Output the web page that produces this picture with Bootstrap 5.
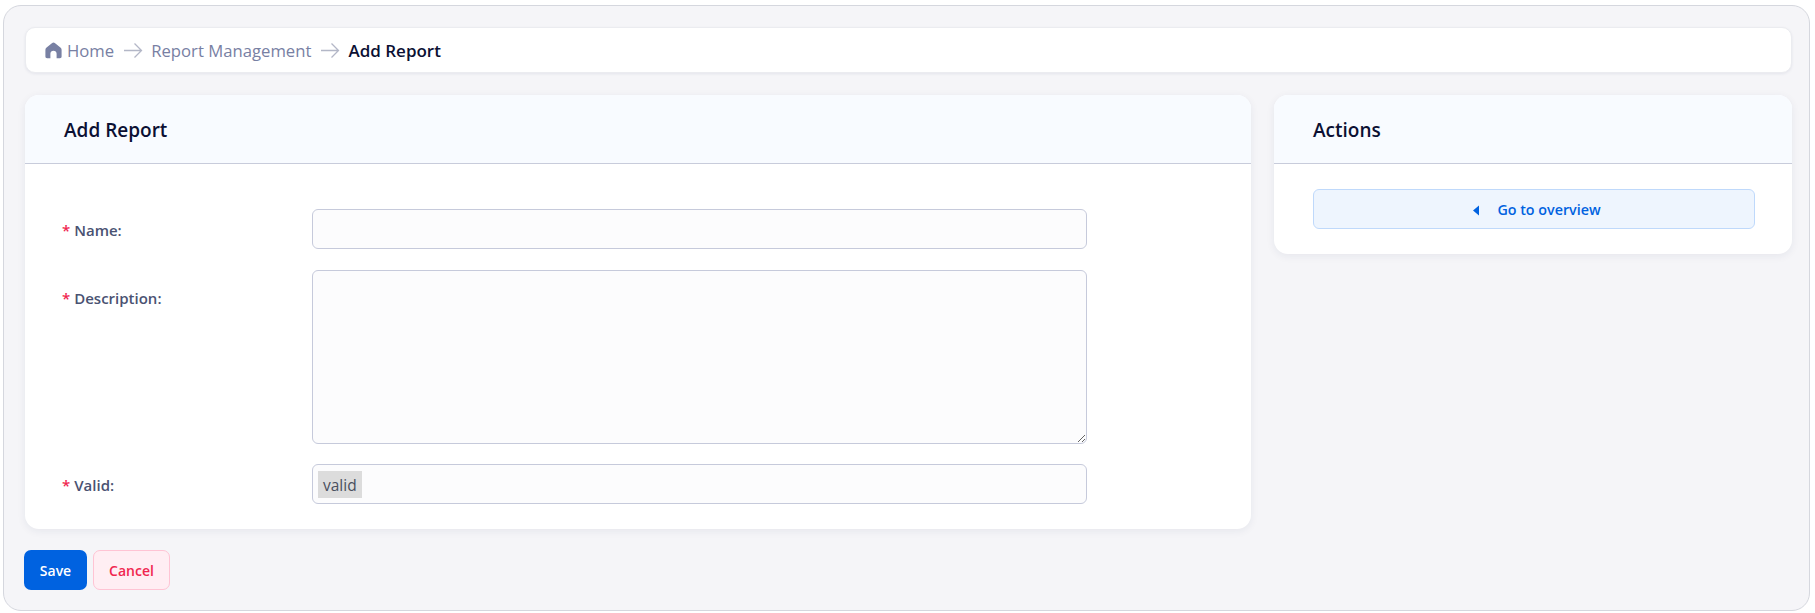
<!DOCTYPE html>
<html lang="en">
<head>
<meta charset="utf-8">
<title>Add Report</title>
<link href="https://cdn.jsdelivr.net/npm/bootstrap@5.3.0/dist/css/bootstrap.min.css" rel="stylesheet">
<style>
html,body{height:100%;background:#fff;}
body{font-family:"Open Sans","Noto Sans",sans-serif;color:#0b1033;overflow:hidden;}
.frame{margin:5px 5px 2px 3px;height:606px;background:#f5f5f8;border:1px solid #d5d7de;border-radius:18px;padding:21px 17px 0 21px;}
.crumbbar{height:46px;background:#fff;border:1px solid #ebecf0;border-radius:10px;box-shadow:0 1px 3px rgba(30,40,90,.08);padding:1px 19px 0;font-size:16.7px;margin-bottom:22px;}
.crumbbar a{color:#7880a3;text-decoration:none;}
.crumbbar .here{color:#0b1033;font-weight:600;font-size:17px;}
.home-ico{margin-right:5px;}
.crumb-sep{margin:0 8px 0 9px;}
.panel{background:#fff;border-radius:14px;box-shadow:0 2px 8px rgba(30,40,90,.07);overflow:hidden;}
.main-col{flex:0 0 1226px;}
.panel-main{height:434px;}
.panel-side{flex:0 0 518px;height:159px;}
.panel-head{height:69px;background:#f8fbff;border-bottom:1px solid #c8ccdb;padding:2px 38px 0 39px;font-size:19px;font-weight:600;color:#0b1033;}
.form-area{padding:45px 38px 0 37px;}
.field-row{margin-bottom:19px;}
.field-row-tall{margin-bottom:20px;}
.field-label{flex:0 0 250px;font-size:15px;font-weight:600;color:#4a5272;line-height:42px;}
.field-row-tall .field-label{padding-top:7px;}
.req{color:#f0264f;margin-right:4px;}
.field-ctl{width:775px;height:40px;background:#fcfcfd;border:1px solid #c6cadb;border-radius:6px;padding:0;box-shadow:none;}
textarea.field-ctl{height:174px;display:block;}
.pick{padding:6px 5px;}
.tag{background:#dcdcdc;color:#4a4f5e;font-size:15.5px;line-height:29px;height:27px;padding:0 5px;display:inline-block;}
.side-body{padding:25px 37px 25px 39px;}
.btn-back{height:40px;background:#eef5fe;border:1px solid #bfd9fb;border-radius:6px;color:#0062e0;font-size:14.3px;font-weight:600;gap:17px;padding:2px 0 0 5px;}
.btn-back:hover{background:#eef5fe;color:#0062e0;}
.foot{margin-top:21px;gap:6px;margin-left:-1px;}
.btn-save,.btn-cancel{height:40px;border-radius:7px;font-size:14px;font-weight:600;padding:0 15px;}
.btn-save{width:63px;background:#0062e0;color:#fff;border:0;}
.btn-cancel{width:77px;background:#ffeef3;color:#f0264f;border:1px solid #ffc4d4;}
</style>
</head>
<body>
<div class="frame">
  <nav class="crumbbar d-flex align-items-center">
    <a href="#" class="d-flex align-items-center">
      <svg width="17" height="17" viewBox="0 0 17 17" class="home-ico" aria-hidden="true"><path fill="#7880a3" d="M8.5 .6 C9 .6 9.4 .8 9.8 1.1 L15.4 5.4 C16.2 6 16.6 6.8 16.6 7.8 V14.5 C16.6 15.6 15.9 16.2 14.9 16.2 H11.6 V11.8 C11.6 10 10.3 8.8 8.5 8.8 C6.7 8.8 5.4 10 5.4 11.8 V16.2 H2.1 C1.1 16.2 .4 15.6 .4 14.5 V7.8 C.4 6.8 .8 6 1.6 5.4 L7.2 1.1 C7.6 .8 8 .6 8.5 .6Z"/></svg>
      Home</a>
    <svg width="20" height="17" viewBox="0 0 20 17" class="crumb-sep" aria-hidden="true"><path d="M1 8.5H18.5M11.5 1.5L18.5 8.5L11.5 15.5" fill="none" stroke="#b3b7c7" stroke-width="1.3"/></svg>
    <a href="#">Report Management</a>
    <svg width="20" height="17" viewBox="0 0 20 17" class="crumb-sep" aria-hidden="true"><path d="M1 8.5H18.5M11.5 1.5L18.5 8.5L11.5 15.5" fill="none" stroke="#b3b7c7" stroke-width="1.3"/></svg>
    <span class="here">Add Report</span>
  </nav>
  <div class="d-flex" style="gap:23px">
    <div class="main-col">
      <section class="panel panel-main">
        <div class="panel-head d-flex align-items-center">Add Report</div>
        <form class="form-area">
          <div class="field-row d-flex">
            <label class="field-label"><span class="req">*</span>Name:</label>
            <input type="text" class="form-control field-ctl">
          </div>
          <div class="field-row-tall d-flex">
            <label class="field-label"><span class="req">*</span>Description:</label>
            <textarea class="form-control field-ctl"></textarea>
          </div>
          <div class="field-row d-flex">
            <label class="field-label"><span class="req">*</span>Valid:</label>
            <div class="field-ctl pick"><span class="tag">valid</span></div>
          </div>
        </form>
      </section>
      <div class="foot d-flex">
        <button type="button" class="btn btn-save">Save</button>
        <button type="button" class="btn btn-cancel">Cancel</button>
      </div>
    </div>
    <aside class="panel panel-side">
      <div class="panel-head d-flex align-items-center">Actions</div>
      <div class="side-body">
        <a href="#" class="btn btn-back d-flex align-items-center justify-content-center">
          <svg width="8" height="11" viewBox="0 0 8 11" aria-hidden="true"><path fill="#0062e0" d="M7 0.5V10.5L1 5.5Z"/></svg>
          Go to overview</a>
      </div>
    </aside>
  </div>
</div>
<script src="https://cdn.jsdelivr.net/npm/bootstrap@5.3.0/dist/js/bootstrap.bundle.min.js"></script>
</body>
</html>
